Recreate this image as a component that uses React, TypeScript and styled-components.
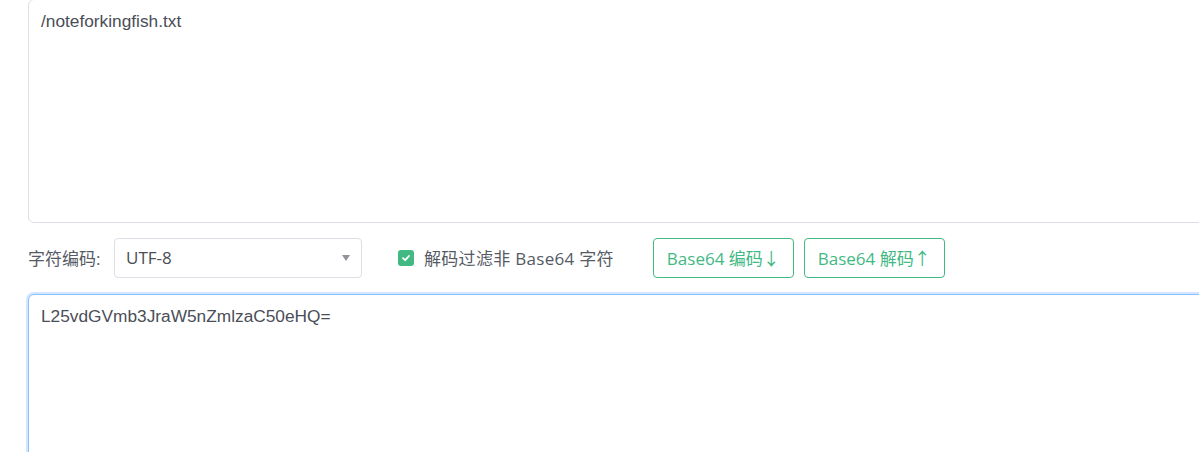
import React from "react";
import styled, { createGlobalStyle } from "styled-components";

const Global = createGlobalStyle`
  html, body { margin: 0; padding: 0; background: #fff; overflow: hidden; }
  body { font-family: "Open Sans", "Noto Sans CJK SC", sans-serif; }
`;

const Page = styled.div`
  width: 1199px;
  height: 453px;
  overflow: hidden;
  padding: 0 0 0 28px;
  box-sizing: border-box;
  display: flex;
  flex-direction: column;
  margin-top: -1px;
`;

const TextArea = styled.textarea<{ $focused?: boolean; $h: number }>`
  display: block;
  flex-shrink: 0;
  width: 1200px;
  height: ${(p) => p.$h}px;
  box-sizing: border-box;
  padding: 10px 12px;
  font-family: "Liberation Sans", Arial, "Noto Sans CJK SC", sans-serif;
  font-size: 17.3px;
  line-height: 22px;
  color: #4a4e57;
  background: #fff;
  border: 1px solid ${(p) => (p.$focused ? "#8cc0ff" : "#dcdfe6")};
  border-radius: 6px;
  resize: none;
  outline: none;
  box-shadow: ${(p) => (p.$focused ? "0 0 0 2px #d4e6ff" : "none")};
`;

const Toolbar = styled.div`
  display: flex;
  flex-shrink: 0;
  align-items: center;
  height: 40px;
  margin: 15px 0 16px;
  font-family: "Open Sans", "Noto Sans CJK SC", sans-serif;
`;

const Label = styled.span`
  font-size: 17px;
  color: #555a64;
  width: 86px;
  padding-bottom: 2px;
`;

const Select = styled.div`
  width: 248px;
  height: 40px;
  box-sizing: border-box;
  border: 1px solid #dcdfe6;
  border-radius: 4px;
  display: flex;
  align-items: center;
  justify-content: space-between;
  padding: 0 11px 2px 11px;
  font-size: 17px;
  color: #4a4e57;
`;

const Arrow = styled.span`
  width: 0;
  height: 0;
  border-left: 4px solid transparent;
  border-right: 4px solid transparent;
  border-top: 6px solid #909399;
  margin-top: 2px;
`;

const CheckLabel = styled.label`
  display: flex;
  align-items: center;
  margin-left: 36px;
  font-size: 17px;
  color: #555a64;
  gap: 10px;
  letter-spacing: 0.3px;
  padding-bottom: 2px;
`;

const Box = styled.span`
  width: 16px;
  height: 16px;
  border-radius: 3px;
  background: #42b983;
  display: flex;
  align-items: center;
  justify-content: center;
  margin-top: 2px;
`;

const Buttons = styled.div`
  display: flex;
  gap: 10px;
  margin-left: 39px;
`;

const Button = styled.button`
  height: 40px;
  box-sizing: border-box;
  padding: 0 13px 2px;
  border: 1px solid #42b983;
  border-radius: 4px;
  background: #fff;
  color: #42b983;
  font-size: 17px;
  font-family: "Open Sans", "Noto Sans CJK SC", sans-serif;
  display: flex;
  align-items: center;
  gap: 2px;
`;

export default function App() {
  return (
    <>
      <Global />
      <Page>
        <TextArea $h={224} defaultValue="/noteforkingfish.txt" />
        <Toolbar>
          <Label>字符编码:</Label>
          <Select>
            <span>UTF-8</span>
            <Arrow />
          </Select>
          <CheckLabel>
            <Box>
              <svg width="10" height="10" viewBox="0 0 10 10">
                <path d="M2 5.2 L4.2 7.2 L8 3" fill="none" stroke="#fff" strokeWidth="1.8" strokeLinecap="round" strokeLinejoin="round" />
              </svg>
            </Box>
            解码过滤非 Base64 字符
          </CheckLabel>
          <Buttons>
            <Button>Base64 编码↓</Button>
            <Button>Base64 解码↑</Button>
          </Buttons>
        </Toolbar>
        <TextArea $h={200} $focused defaultValue="L25vdGVmb3JraW5nZmlzaC50eHQ=" />
      </Page>
    </>
  );
}
